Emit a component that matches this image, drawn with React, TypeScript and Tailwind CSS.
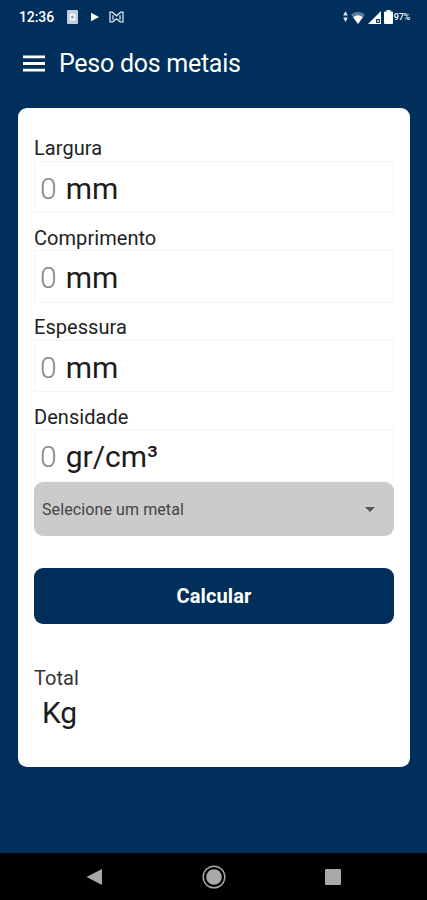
const fields = [
  { label: "Largura", unit: "mm" },
  { label: "Comprimento", unit: "mm" },
  { label: "Espessura", unit: "mm" },
  { label: "Densidade", unit: "gr/cm³" },
];

function StatusBar() {
  return (
    <div className="flex h-[34px] items-center justify-between pl-[19px] pr-[17px] text-white">
      <div className="flex items-center">
        <span className="w-[48px] text-[14px] font-medium leading-none tracking-[-0.1px]">12:36</span>
        <svg className="h-[14px] w-[11px]" viewBox="0 0 11 14">
          <rect width="11" height="14" rx="1" fill="#c3cedb" />
          <rect x="2.5" y="3.5" width="6" height="7" rx="1" fill="#f4f7fa" />
          <circle cx="5.5" cy="7" r="1.5" fill="#8fa3ba" />
        </svg>
        <svg className="ml-[13px] h-[10px] w-[8px]" viewBox="0 0 8 10">
          <path d="M0 .8 8 5 0 9.2Z" fill="white" />
        </svg>
        <svg className="ml-[10px] h-[12px] w-[15px]" viewBox="0 0 15 12" fill="none" stroke="#dce4ed">
          <path d="M1 1.2v9.6h2.8l3.7-3 3.7 3H14V1.2h-2.3L7.5 4.8 3.3 1.2Z" strokeWidth="1.3" />
          <path d="M4 4.2v4.6M11 4.2v4.6" strokeWidth="1.3" />
        </svg>
      </div>
      <div className="flex items-center">
        <svg className="h-[12px] w-[5px]" viewBox="0 0 5 12">
          <path d="M2.5 0 4.8 4.5H.2ZM2.5 11 .2 6.5h4.6Z" fill="#dce4ed" />
        </svg>
        <svg className="ml-[3px] h-[13px] w-[14px]" viewBox="0 0 14 13">
          <path d="M0 3.6Q7-2 14 3.6L7 13Z" fill="#5b7b9c" />
          <path d="M2.2 6.2Q7 2.4 11.8 6.2L7 13Z" fill="white" />
        </svg>
        <svg className="ml-[3px] h-[13px] w-[13px]" viewBox="0 0 13 13">
          <path d="M13 0v13H0Z" fill="white" />
          <path d="M8 8h4v4H8Z" fill="#002f5b" />
          <path d="m8.8 8.8 2.6 2.6m0-2.6-2.6 2.6" stroke="white" strokeWidth=".8" />
        </svg>
        <svg className="ml-[3px] h-[14px] w-[9px]" viewBox="0 0 9 14">
          <path d="M2.5 0h4v1.5H8q1 0 1 1V13q0 1-1 1H1q-1 0-1-1V2.5q0-1 1-1h1.5Z" fill="white" />
        </svg>
        <span className="ml-[1px] text-[9px] font-medium leading-none tracking-[-0.2px]">97%</span>
      </div>
    </div>
  );
}

function NavigationBar() {
  return (
    <div className="flex h-[47px] items-center bg-black px-[86px]">
      <svg className="h-4 w-4" viewBox="0 0 16 16">
        <path d="M.5 8 16 0v16Z" fill="#a9a9a9" />
      </svg>
      <svg className="ml-[100px] h-6 w-6" viewBox="0 0 24 24">
        <circle cx="12" cy="12" r="10.8" fill="none" stroke="#a9a9a9" strokeWidth="1.4" />
        <circle cx="12" cy="12" r="7.8" fill="#a9a9a9" />
      </svg>
      <svg className="ml-[99px] h-4 w-4" viewBox="0 0 16 16">
        <rect width="16" height="16" rx="1" fill="#a9a9a9" />
      </svg>
    </div>
  );
}

export default function App() {
  return (
    <div className="flex h-[900px] w-[427px] flex-col overflow-hidden bg-[#002f5b] font-[Roboto,sans-serif]">
      <StatusBar />

      <header className="flex h-[58px] items-center pl-[23px] text-white">
        <svg className="h-[17px] w-[22px]" viewBox="0 0 22 17">
          <path d="M0 1.8h22M0 8.5h22M0 15.2h22" stroke="white" strokeWidth="2.8" />
        </svg>
        <h1 className="ml-[14px] text-[25px] leading-none tracking-[-0.27px]">Peso dos metais</h1>
      </header>

      <main className="mx-[18px] mt-4 h-[659px] w-[392px] rounded-[9px] bg-white px-4 pt-[15.5px]">
        {fields.map((field) => (
          <label key={field.label} className="block">
            <span className="flex h-[37px] items-center pt-[12px] text-[20px] leading-6 tracking-[0.05px] text-[#222]">
              {field.label}
            </span>
            <span className="flex h-[52.5px] items-center border border-[#f5f5f5] pl-[5px] pt-1 text-[30px] leading-none">
              <span className="font-light text-[#888]">0</span>
              <span className="ml-[9px] text-[#1c1c1c]">{field.unit}</span>
            </span>
          </label>
        ))}

        <button className="flex h-[54px] w-full items-center justify-between rounded-[9px] bg-[#cbcbcb] pl-2 pr-[19px] pt-[2px] text-[16px] tracking-[0.1px] text-[#444]">
          Selecione um metal
          <svg className="h-[5px] w-[10px]" viewBox="0 0 10 5">
            <path d="M0 0h10L5 5Z" fill="#555" />
          </svg>
        </button>

        <button className="mt-[32px] h-[56px] w-full rounded-[9px] bg-[#002f5b] text-[20px] font-bold tracking-[0.1px] text-white">
          Calcular
        </button>

        <div className="mt-[42px] text-[20px] leading-6 tracking-[0.05px] text-[#333]">Total</div>
        <div className="mt-[5px] pl-2 text-[30px] leading-9 tracking-[-0.3px] text-[#1c1c1c]">Kg</div>
      </main>

      <div className="mt-auto">
        <NavigationBar />
      </div>
    </div>
  );
}
